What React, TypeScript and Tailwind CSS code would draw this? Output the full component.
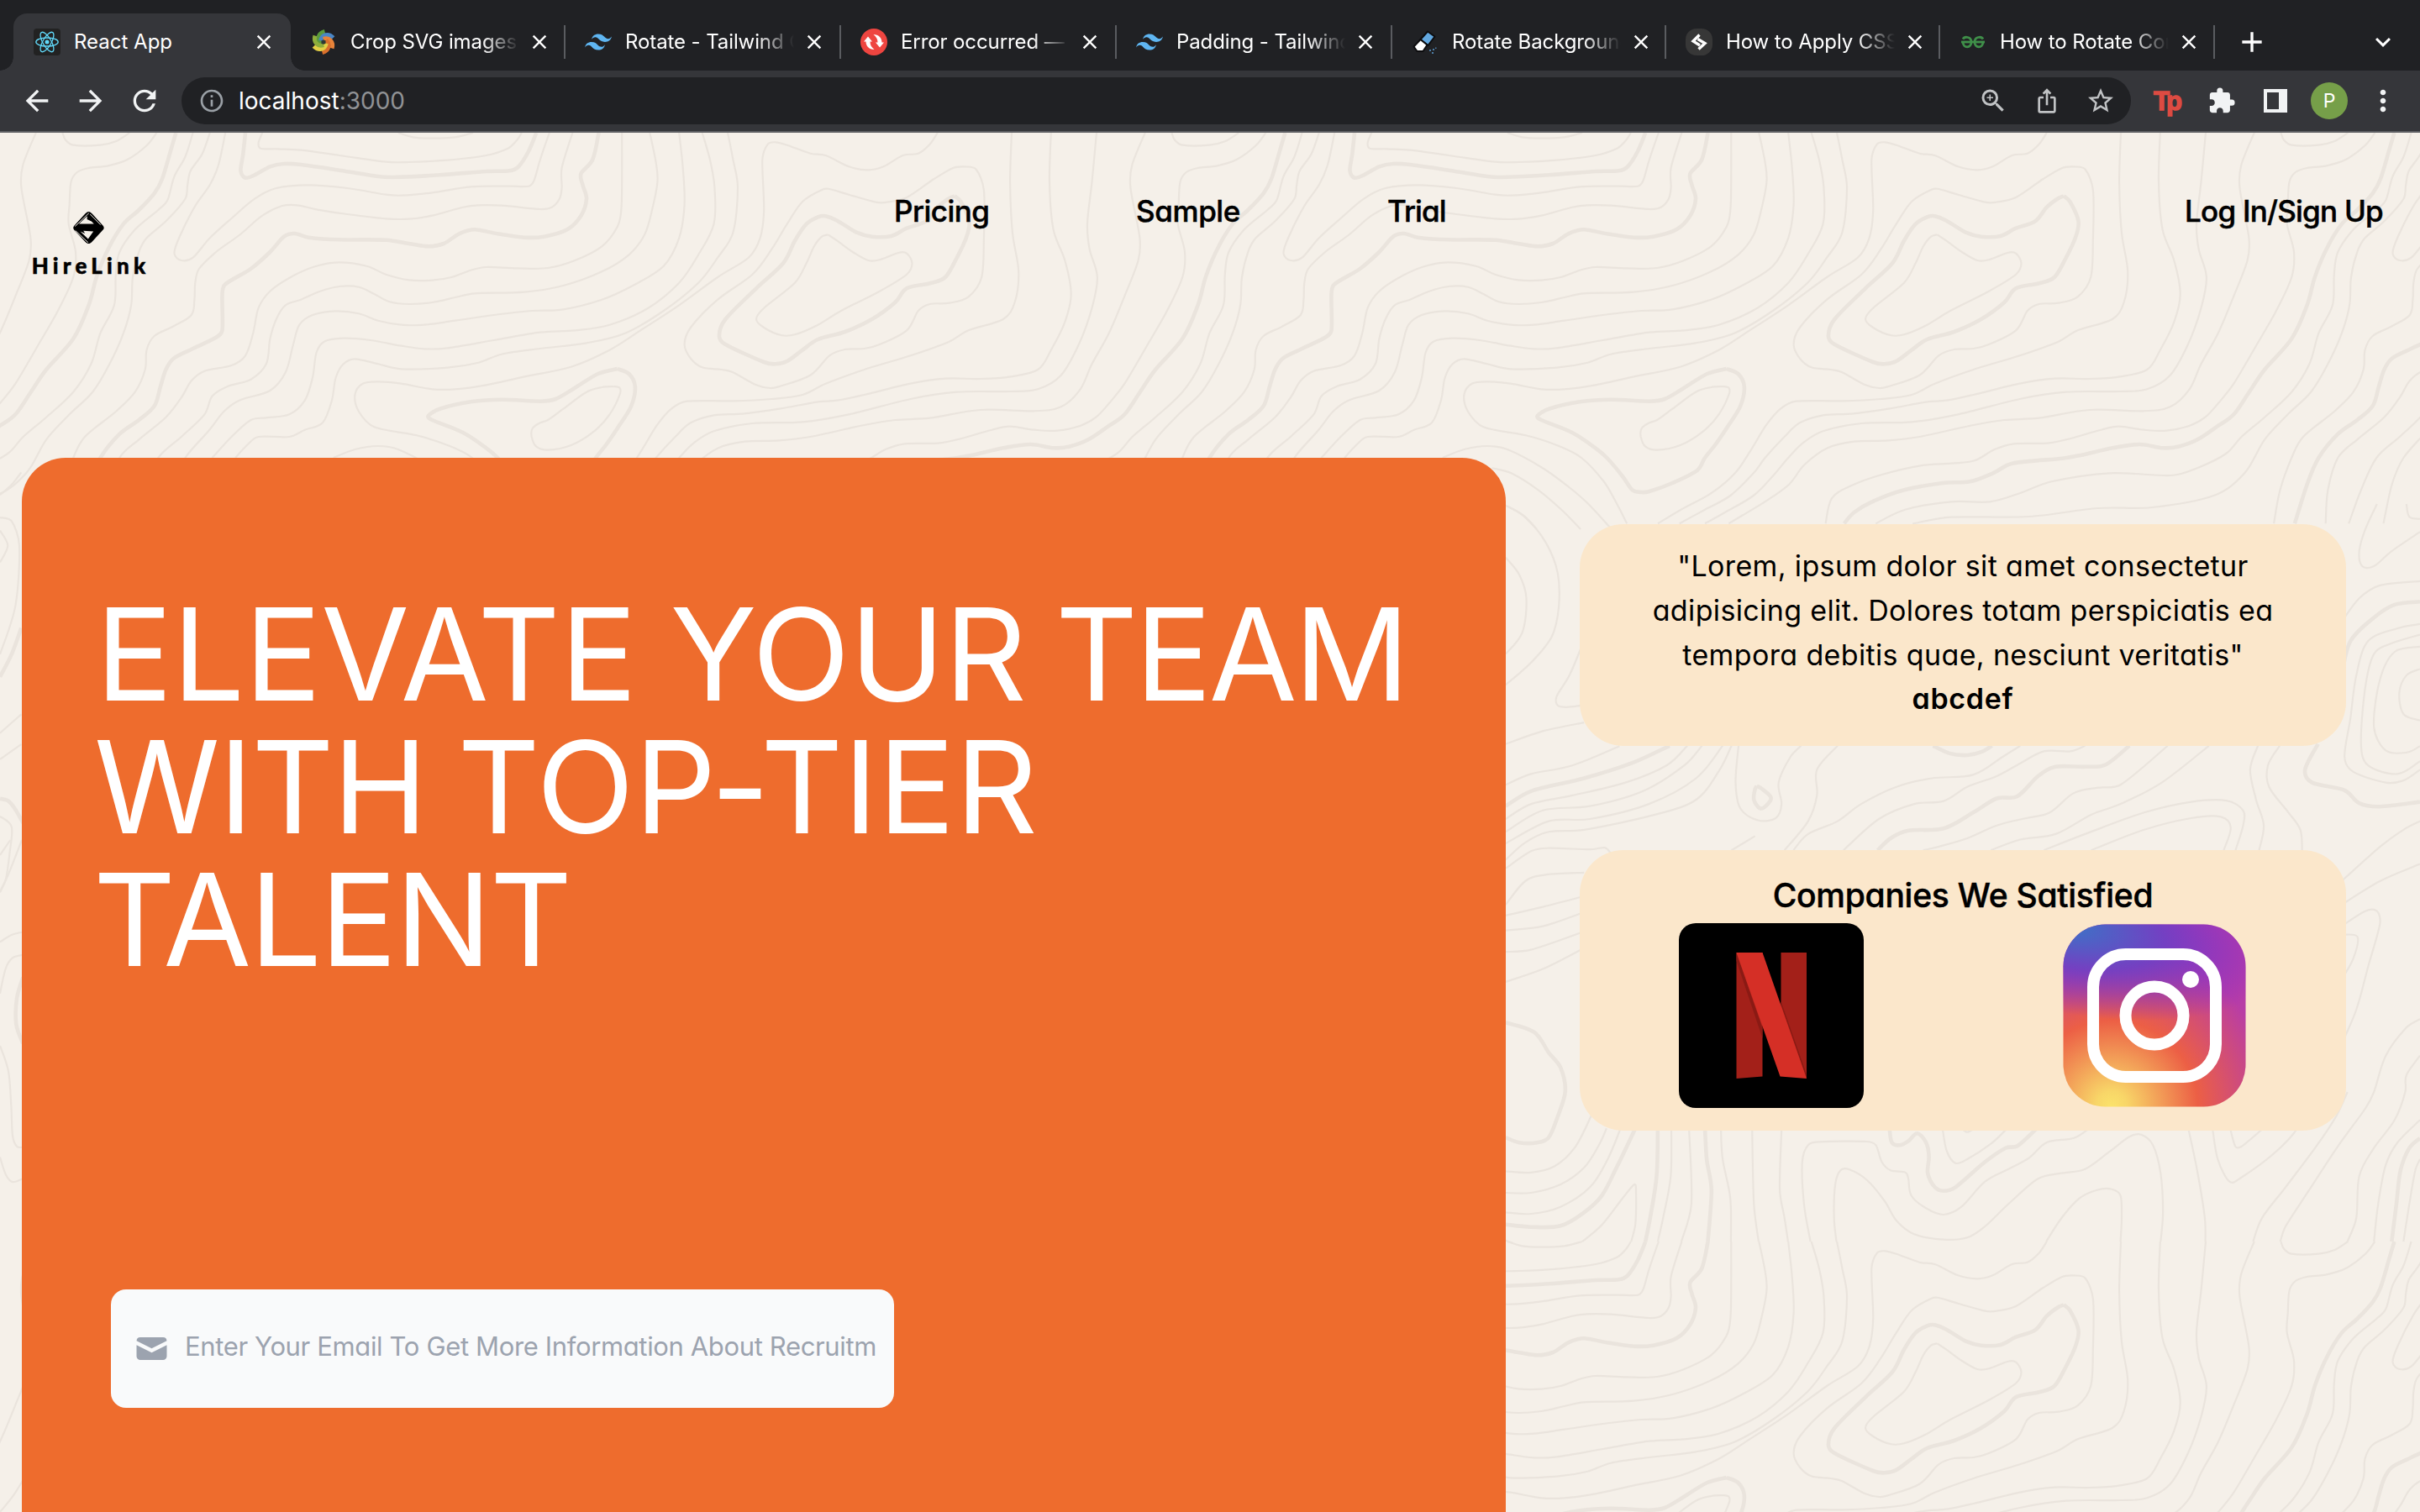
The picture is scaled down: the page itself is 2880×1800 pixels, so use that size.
import React from 'react';
import {
  MdAdd,
  MdArrowBack,
  MdArrowForward,
  MdClose,
  MdExpandMore,
  MdExtension,
  MdInfoOutline,
  MdIosShare,
  MdMoreVert,
  MdRefresh,
  MdStarBorder,
  MdZoomIn,
} from 'react-icons/md';

/* ---------- topographic background ---------- */

type Curve = { d: string; thick?: boolean };
type Project = (x: number, y: number) => [number, number];

const PERIOD = 1320;

// Curves that repeat every 1320px in both directions.
const tiled: Curve[] = [
  { d: '1484,24 1467,140 1465,220 1477,400 1475,480 1457,610 1437,740 1415,850 1400,940 1375,1003 1340,1018 1270,1014 1205,1043 1160,1050 1120,1068 1050,1110 1010,1123 965,1127 931,1150 901,1210 881,1280 851,1340 821,1390 803,1420' },
  { d: '81,24 85,50 95,68 130,68 150,55 168,24' },
  { d: '203,24 190,70 165,120 140,142 115,150 100,165 92,200 90,280 89,350 98,450 95,540 75,660 50,780 20,920 0,990 -17,1040 -37,1070 -67,1088 -97,1085 -129,1073 -152,1085 -197,1120 -222,1133 -265,1135 -290,1155 -316,1195 -346,1205 -386,1213 -436,1245 -476,1285 -501,1330 -509,1420' },
  { thick: true, d: '228,24 222,80 210,190 200,240 180,300 160,350 140,440 125,540 115,640 95,760 60,870 40,950 20,1030 0,1070 -27,1120 -52,1145 -72,1150 -102,1137 -137,1150 -177,1175 -202,1187 -267,1205 -292,1240 -322,1270 -357,1275 -407,1300 -447,1340 -472,1380 -485,1420' },
  { d: '250,24 240,110 226,180 217,265 205,300 175,370 155,450 150,530 148,640 130,740 118,850 95,950 60,1040 30,1110 10,1170 -26,1220 -61,1248 -141,1240 -216,1270 -256,1310 -296,1342 -346,1342 -406,1370 -444,1420' },
  { d: '272,24 262,100 247,160 243,210 240,260 215,340 190,400 180,450 172,540 170,640 160,740 142,850 120,950 90,1030 60,1120 34,1240 -6,1320 -86,1362 -156,1365 -246,1395 -346,1397 -396,1420' },
  { d: '292,24 283,140 272,210 252,290 232,400 226,455 235,480 250,470 272,400 300,330 330,260 358,222 400,211 450,222 500,245 520,248 560,238 610,217 660,215 685,215 692,195 700,120 712,24' },
  { d: '72,1420 80,1300 95,1185 110,1110 150,1020 175,950 188,870 190,800 200,750 225,715 248,675 252,620 253,560 258,510 280,450 310,390 340,320 365,286 385,283 410,298 450,315 500,331 530,332 560,320 600,290 620,283 650,284 700,297 715,290 725,260 728,220 728,150 742,24' },
  { thick: true, d: '318,24 315,100 312,160 318,185 330,175 350,145 368,135 390,138 440,158 490,180 510,183 570,175 630,162 660,160 672,145 685,90 695,24' },
  { d: '340,24 335,60 338,80 360,82 390,86 440,105 500,128 530,129 580,122 630,105 658,80 670,50 676,24' },
  { d: '516,24 535,40 560,44 590,40 613,24' },
  { thick: true, d: '776,24 768,120 753,170 755,210 760,260 753,320 735,370 705,395 680,398 645,385 615,370 595,385 575,420 555,430 530,420 500,407 440,406 400,398 382,384 368,395 350,450 325,510 292,565 288,600 288,730 280,755 250,795 225,830 215,870 208,930 200,1000 180,1050 155,1100 130,1185 115,1280 99,1420' },
  { d: '806,24 806,200 805,300 800,360 780,430 745,480 710,507 670,508 630,504 610,515 585,540 560,551 530,550 500,530 475,500 440,487 410,500 380,535 350,590 335,650 328,740 318,820 300,855 265,875 248,910 235,970 215,1040 180,1120 155,1185 142,1300 139,1420' },
  { d: '842,24 850,130 852,200 845,300 835,390 815,460 780,520 730,570 680,593 615,598 590,612 560,630 530,636 505,628 485,600 465,575 440,573 415,590 390,620 370,640 358,690 350,760 345,850 325,905 295,930 275,965 265,1030 235,1110 205,1185 185,1300 169,1420' },
  { d: '880,24 885,150 887,280 880,400 860,500 820,570 780,620 730,655 690,660 640,675 590,695 550,710 520,710 490,695 465,670 435,661 405,675 388,710 380,780 370,880 350,945 310,980 290,1020 270,1090 240,1185 225,1280 214,1420' },
  { d: '910,24 920,120 926,220 925,350 905,460 880,560 840,650 790,710 745,730 700,737 640,765 580,793 550,796 520,785 480,765 445,758 420,770 410,810 405,900 395,980 375,1030 345,1042 325,1050 300,1110 275,1185' },
  { d: '943,24 950,120 956,220 950,380 930,470 905,560 860,660 810,740 760,775 700,795 650,815 620,845 580,863 520,868 490,850 460,832 445,850 435,900 430,980 418,1060 395,1085 375,1110 335,1110 320,1140 305,1185' },
  { d: '432,1185 460,1155 490,1143 516,1155 561,1220 596,1290 621,1350 651,1440' },
  { d: '496,1222 521,1240 556,1300 586,1370 611,1440' },
  { d: '514,1355 536,1390 554,1440' },
  { d: '1215,24 1205,65 1190,98 1170,105 1145,145 1125,157 1100,145 1070,105 1050,98 1020,68 1005,58 995,65 988,120 990,300 985,400 970,470 930,540 880,640 830,730 790,800 740,860 680,895 630,925 590,940 560,940 520,920 490,913 470,920 460,960 465,1020 485,1075 540,1105 580,1140 612,1185 641,1270 658,1350 671,1420' },
  { thick: true, d: '800,867 815,885 823,930 818,1000 800,1080 785,1140 772,1185 762,1230 730,1275 700,1305 690,1308 678,1300 665,1250 645,1185 630,1150 600,1095 560,1050 555,1035 570,1010 610,985 650,977 700,983 720,975 745,935 775,885 800,867' },
  { d: '795,930 803,935 803,960 790,1030 770,1090 740,1140 710,1157 695,1145 689,1110 690,1080 700,1060 710,1050 730,1010 760,950 780,933 795,930' },
  { d: '1250,145 1265,155 1275,230 1275,400 1272,540 1255,610 1230,632 1205,636 1190,660 1175,730 1140,780 1120,795 1095,798 1075,820 1050,890 1010,930 998,936 980,925 950,880 935,870 910,862 895,830 887,780 895,720 930,620 975,530 1000,440 1020,350 1040,270 1065,228 1075,225 1100,245 1135,272 1150,272 1175,255 1210,190 1235,150 1250,145' },
  { thick: true, d: '1237,250 1245,270 1256,340 1252,400 1240,470 1225,540 1205,562 1175,580 1160,630 1130,690 1095,735 1060,762 1040,800 1020,840 1005,850 990,843 940,780 932,750 940,690 980,580 1015,490 1030,410 1045,350 1060,325 1070,322 1085,338 1110,380 1130,395 1155,393 1175,365 1200,340 1215,290 1230,258 1237,250' },
  { d: '1073,388 1085,410 1105,450 1125,480 1140,478 1165,452 1175,455 1182,490 1175,530 1140,590 1090,660 1060,710 1030,745 1012,747 990,720 980,690 990,650 1030,560 1045,490 1055,430 1065,395 1073,388' },
  { d: '1311,24 1309,200 1312,380 1320,520 1315,630 1300,690 1255,730 1230,770 1180,820 1120,870 1070,920 1040,960 1000,975 950,982 890,983 870,1010 851,1070 831,1160 811,1240 781,1310 741,1370 711,1420' },
  { d: '1362,24 1360,200 1365,370 1380,480 1388,600 1380,700 1362,800 1345,870 1310,895 1270,903 1225,902 1180,920 1120,960 1085,980 1060,985 1010,1010 965,1027 925,1033 895,1060 875,1110 850,1185 835,1240 805,1320 772,1370 739,1420' },
  { d: '1421,24 1415,200 1409,350 1412,440 1422,540 1415,650 1398,780 1375,890 1345,940 1310,948 1240,950 1180,975 1100,1030 1040,1057 975,1062 925,1090 900,1130 880,1185 860,1250 835,1320 798,1380 772,1420' },
];

// Curves around the two side cards.
const aside: Curve[] = [
  { d: '17,125 40,165 52,220 45,300 17,350' },
  { d: '20,5 50,30 85,90 105,160 107,240 95,310 60,370 17,422' },
  { d: '145,335 125,400 103,450 105,470 120,474 145,470' },
  { d: '17,560 80,530 150,510' },
  { thick: true, d: '17,705 60,670 150,640 230,605 295,564' },
  { d: '17,655 60,630 130,610 210,565' },
  { d: '17,735 60,700 130,680 220,650 290,610 325,564' },
  { d: '17,765 80,715 160,705 250,670 320,610 350,564' },
  { d: '17,792 90,740 160,735 260,700 340,640 385,564' },
  { d: '17,830 50,790 90,765 150,760 270,725 340,690 380,620 400,564' },
  { d: '17,850 60,810 90,803 160,806 185,802 195,815' },
  { d: '17,935 50,880 85,865 150,860' },
  { d: '17,960 80,940 150,915' },
  { d: '17,995 80,985 145,955' },
  { d: '17,1045 60,1040 145,1000' },
  { d: '17,1115 80,1085 145,1040' },
  { thick: true, d: '17,1210 65,1232 90,1280 110,1315 118,1370 105,1430 90,1478 70,1490 40,1490 17,1478' },
  { d: '17,1557 60,1560 100,1545 135,1500 163,1425' },
  { d: '412,564 407,650 415,710 445,738 475,733 485,700 480,650 500,590 518,564' },
  { thick: true, d: '443,658 450,663 467,685 458,705 448,710 438,690 440,665 443,658' },
  { d: '580,564 545,620 545,680 530,740 490,808' },
  { thick: true, d: '742,564 770,582 800,586 825,578 842,564' },
  { d: '890,564 860,590 810,632 740,640 680,660 620,700 580,740 530,770 505,808' },
  { d: '1000,564 975,577 930,577 890,605 850,635 800,660 760,693 710,700 650,735 590,808' },
  { thick: true, d: '1075,564 1035,608 1000,613 950,613 920,635 885,682 850,687 810,720 760,757 700,762 670,780 648,808' },
  { d: '1140,564 1060,655 1020,662 980,675 940,720 900,733 850,750 800,780 750,800 725,808' },
  { d: '1210,564 1130,650 1060,700 1010,725 950,770 890,783 840,808' },
  { d: '1293,564 1280,620 1290,690 1303,750 1295,808' },
  { d: '1330,564 1310,610 1312,660 1345,720 1365,760 1368,808' },
  { d: '930,808 1000,770 1100,720 1180,695 1240,692 1268,715 1268,750 1255,808' },
  { d: '1010,808 1100,760 1180,733 1230,730 1247,755 1235,808' },
  { d: '400,808 440,775' },
  { d: '1495,0 1475,60 1465,110 1470,145 1490,145 1520,110 1568,65' },
  { d: '1545,0 1550,30 1568,35' },
  { d: '1435,275 1465,220 1500,190 1568,180' },
  { thick: true, d: '1435,400 1450,320 1490,265 1525,235 1568,228' },
  { d: '1568,280 1530,290 1480,320 1460,400 1450,500 1440,590 1455,625 1510,650 1540,645 1568,620' },
  { d: '1568,305 1520,325 1490,350 1475,430 1468,560 1480,610 1530,630 1568,600' },
  { d: '1568,333 1525,345 1500,410 1490,520 1510,575 1545,580 1568,565' },
  { d: '1568,385 1545,400 1533,440 1540,490 1568,505' },
  { thick: true, d: '1395,560 1373,620 1385,650 1440,668 1465,698 1500,706 1568,695' },
  { d: '1435,880 1500,800 1540,760 1568,740' },
  { d: '1435,935 1500,880 1568,840' },
  { d: '1435,985 1475,950 1495,950 1500,980 1480,1080 1460,1180 1435,1260' },
  { d: '1435,1005 1462,1010 1455,1060 1435,1110' },
];

// Curves under the cards, down to the next vertical repeat.
const lower: Curve[] = [
  { d: '17,360 60,360 110,330 150,270 175,190 188,130' },
  { d: '17,430 60,435 110,410 160,340 190,240 212,130' },
  { thick: true, d: '17,473 60,482 110,478 150,430 180,370 205,270 237,130' },
  { d: '17,530 30,540' },
  { d: '147,534 180,475 215,380 235,330 238,350 237,470 230,534' },
  { thick: true, d: '275,130 273,300 262,450 254,534' },
  { d: '298,130 297,300 285,440 275,534' },
  { d: '328,130 332,400 315,534' },
  { thick: true, d: '355,130 358,240 366,350 360,534' },
  { d: '382,130 385,240 398,380 399,534' },
  { d: '435,130 438,400 446,534' },
  { d: '485,130 482,350 490,450 496,534' },
  { d: '534,534 523,400 520,250 530,190 550,178 630,177 645,190 655,250 670,280 695,287 700,310 705,370 730,415 760,438 790,410 830,320 870,275 905,235 935,180 980,165 1007,130' },
  { d: '578,534 574,450 576,330 585,280 600,277 630,315 660,390 680,460 710,508 760,527 800,520 830,480 870,400 920,310 960,290 1000,275 1040,215 1075,160 1095,152 1115,190 1128,290 1132,430 1128,534' },
  { thick: true, d: '668,130 672,180 685,190 700,175 715,148 730,180 735,230 733,290 745,340 760,353 780,340 830,250 865,200 885,193 918,130' },
  { d: '758,130 765,210 780,254 800,240 840,185 868,130' },
  { d: '790,130 800,143 812,130' },
  { d: '934,534 960,450 990,380 1020,350 1045,347 1060,370 1062,450 1060,534' },
  { d: '1175,130 1190,280 1203,450 1204,534' },
  { d: '1216,130 1225,240 1245,320 1265,305 1320,220 1360,130 1385,20' },
  { d: '1246,130 1255,195 1265,195 1302,130' },
  { d: '1285,534 1300,450 1340,340 1390,200 1425,90 1445,0' },
  { d: '1331,534 1340,480 1380,350 1430,190 1475,60 1490,0 1510,-130 1545,-230 1568,-260' },
  { d: '1445,534 1460,450 1465,300 1490,200 1525,100 1543,0 1545,-60 1568,-130' },
  { d: '1490,534 1497,400 1510,260 1530,180 1568,100' },
  { thick: true, d: '1520,534 1528,400 1535,280 1550,200 1568,165' },
  { d: '1540,534 1550,400 1560,280 1568,240' },
];

// Narrow strip left of the hero panel.
const leftEdge: Curve[] = [
  { d: '0,155 12,128 22,95' },
  { d: '0,215 12,225 20,290 16,450 0,580' },
  { d: '0,250 8,290 0,335' },
  { thick: true, d: '0,640 12,580 22,510' },
  { d: '0,790 22,740' },
  { d: '0,860 22,820' },
  { thick: true, d: '0,965 8,970 15,990 24,1030' },
  { d: '0,1012 12,1040 10,1110 6,1180 0,1215' },
];
const leftLow: Curve[] = [
  { d: '0,35 37,0' },
  { d: '0,120 30,80 78,0' },
  { d: '0,238 40,222 78,215' },
  { d: '0,358 20,300 45,275 85,268' },
  { thick: true, d: '82,320 60,370 58,430 82,475' },
  { d: '0,480 30,540 40,620 45,690 60,715 82,717' },
  { d: '0,740 20,780 45,798 82,790' },
];

// Catmull-Rom spline through the listed points.
function spline(d: string, project: Project): string {
  const p = d.split(' ').map((s) => {
    const [x, y] = s.split(',').map(Number);
    return project(x, y);
  });
  let out = `M${p[0][0].toFixed(1)} ${p[0][1].toFixed(1)}`;
  for (let i = 0; i < p.length - 1; i++) {
    const a = p[i - 1] ?? p[i];
    const b = p[i];
    const c = p[i + 1];
    const e = p[i + 2] ?? c;
    const len = Math.hypot(c[0] - b[0], c[1] - b[1]);
    const ctl = (from: number[], to: number[]) => {
      const vx = to[0] - from[0];
      const vy = to[1] - from[1];
      const m = Math.hypot(vx, vy) || 1;
      const k = Math.min(m / 6, len / 2.6) / m;
      return [vx * k, vy * k];
    };
    const t1 = ctl(a, c);
    const t2 = ctl(b, e);
    out += `C${(b[0] + t1[0]).toFixed(1)} ${(b[1] + t1[1]).toFixed(1)} ${(c[0] - t2[0]).toFixed(1)} ${(c[1] - t2[1]).toFixed(1)} ${c[0].toFixed(1)} ${c[1].toFixed(1)}`;
  }
  return out;
}

function Curves({ list, project }: { list: Curve[]; project: Project }) {
  return (
    <>
      {list.map((c, i) => (
        <path key={i} d={spline(c.d, project)} strokeWidth={c.thick ? 4.6 : 2.2} />
      ))}
    </>
  );
}

function Topography() {
  return (
    <svg className="absolute inset-0 h-full w-full" viewBox="0 158 2880 1642" fill="none" stroke="#eae4dd">
      <defs>
        <g id="topo">
          <Curves list={tiled} project={(x, y) => [x / 1.0889, 150 + y / 3]} />
        </g>
      </defs>
      {[-1, 0, 1, 2].map((ix) =>
        [0, 1].map((iy) => <use key={`${ix}${iy}`} href="#topo" x={ix * PERIOD} y={iy * PERIOD} />),
      )}
      <Curves list={aside} project={(x, y) => [1780 + x / 1.4255, 600 + y / 1.96]} />
      <Curves list={lower} project={(x, y) => [1780 + x / 1.4255, 1300 + y / 3]} />
      <Curves list={leftEdge} project={(x, y) => [x * 1.148, 520 + y / 2.24]} />
      <Curves list={leftLow} project={(x, y) => [x / 3, 1000 + y * 0.5102]} />
    </svg>
  );
}

/* ---------- favicons ---------- */

function ReactFavicon() {
  return (
    <svg viewBox="0 0 32 32" className="size-8">
      <rect width="32" height="32" rx="4" fill="#222222" />
      <g fill="none" stroke="#61dafb" strokeWidth="1.3">
        <ellipse cx="16" cy="16" rx="13.2" ry="5" />
        <ellipse cx="16" cy="16" rx="13.2" ry="5" transform="rotate(60 16 16)" />
        <ellipse cx="16" cy="16" rx="13.2" ry="5" transform="rotate(120 16 16)" />
      </g>
      <circle cx="16" cy="16" r="2.5" fill="#61dafb" />
    </svg>
  );
}

// Six curved blades around the centre.
function SwirlFavicon() {
  const blades = ['#5b9a3c', '#4a86c5', '#e8833a', '#d9702c', '#e3cf45', '#8fae3c'];
  return (
    <svg viewBox="0 0 32 32" className="size-8" fill="none" strokeWidth="5">
      {blades.map((c, i) => (
        <path key={i} d="M13 18C7.500 13 9.500 5.500 17.500 3.500" stroke={c} transform={`rotate(${i * 60} 16 16)`} />
      ))}
      <circle cx="16" cy="16" r="2.600" fill="#2d3a33" />
    </svg>
  );
}

function TailwindFavicon() {
  return (
    <svg viewBox="0 0 24 24" className="size-8" fill="#5fb6f2">
      <path d="M12.001 4.800c-3.200 0-5.200 1.600-6 4.800 1.200-1.600 2.600-2.200 4.200-1.800.913.228 1.565.890 2.288 1.624C13.666 10.618 15.027 12 18.001 12c3.200 0 5.200-1.600 6-4.800-1.200 1.600-2.600 2.200-4.200 1.800-.913-.228-1.565-.890-2.288-1.624C16.337 6.182 14.976 4.800 12.001 4.800zm-6 7.200c-3.200 0-5.200 1.600-6 4.800 1.200-1.600 2.600-2.200 4.200-1.800.913.228 1.565.890 2.288 1.624 1.177 1.194 2.538 2.576 5.512 2.576 3.200 0 5.200-1.600 6-4.800-1.200 1.600-2.600 2.200-4.200 1.800-.913-.228-1.565-.890-2.288-1.624C10.337 13.382 8.976 12 6.001 12z" />
    </svg>
  );
}

function ConvertFavicon() {
  return (
    <svg viewBox="0 0 32 32" className="size-8">
      <circle cx="16" cy="16" r="16" fill="#ee4540" />
      <g fill="#fff">
        <path d="M4 15.500 9 9.500l5 6h-2.500c0 4 1.500 6.500 5 9.500C10.500 25 6.500 21 6.500 15.500z" />
        <path d="M28 16.500 23 22.500l-5-6h2.500c0-4-1.500-6.500-5-9.500 6 0 10 4 10 9.500z" />
      </g>
    </svg>
  );
}

function EraserFavicon() {
  return (
    <svg viewBox="0 0 32 32" className="size-8" strokeLinejoin="round">
      <path d="M19 3.500 27.500 9.500 19.500 20 10.500 13z" fill="#62a8e0" stroke="#0c0c0e" strokeWidth="2" />
      <path d="M10.500 13 18.500 19.500 13.500 27H6.500l-4-5.500z" fill="#fff" stroke="#0c0c0e" strokeWidth="2" />
      <path d="M21 25h2v2h-2zM24 28h2v2h-2zM25 24h2v2h-2zM28 22.500h1.500V24H28z" fill="#4f7fa8" />
    </svg>
  );
}

function DarkFavicon() {
  return (
    <svg viewBox="0 0 32 32" className="size-8">
      <rect width="32" height="32" rx="13" fill="#373737" />
      <path d="M16.500 7.500 9 15l8 5" fill="none" stroke="#fff" strokeWidth="3.400" />
      <path d="M14.500 12.500l8.500 5-7.500 7" fill="none" stroke="#fff" strokeWidth="3.400" />
    </svg>
  );
}

function GeeksFavicon() {
  return (
    <svg viewBox="0 0 32 32" className="size-8" fill="none" stroke="#3f8f49" strokeWidth="2.800">
      <path d="M2 16h28" />
      <path d="M4 12.500C6 9 14 9.500 14 16c0 7.500-9.500 8-10 0M28 12.500C26 9 18 9.500 18 16c0 7.500 9.500 8 10 0" />
    </svg>
  );
}

/* ---------- browser chrome ---------- */

const tabs = [
  { title: 'Crop SVG images', icon: <SwirlFavicon />, width: 'w-[327px]' },
  { title: 'Rotate - Tailwind CSS', icon: <TailwindFavicon />, width: 'w-[328px]' },
  { title: 'Error occurred — Convert', icon: <ConvertFavicon />, width: 'w-[328px]' },
  { title: 'Padding - Tailwind CSS', icon: <TailwindFavicon />, width: 'w-[328px]' },
  { title: 'Rotate Background', icon: <EraserFavicon />, width: 'w-[326px]' },
  { title: 'How to Apply CSS', icon: <DarkFavicon />, width: 'w-[326px]' },
  { title: 'How to Rotate Container', icon: <GeeksFavicon />, width: 'w-[327px]' },
];

function TabBar() {
  return (
    <div className="flex h-[84px] shrink-0 bg-[#202124] pl-4 text-2xl text-white">
      <div className="relative mt-4 flex h-[68px] w-[330px] shrink-0 items-center rounded-t-[16px] bg-[#35363a] pl-6">
        <span className="absolute bottom-0 -left-4 size-4 bg-[radial-gradient(circle_at_0_0,transparent_15.500px,#35363a_16px)]" />
        <span className="absolute -right-4 bottom-0 size-4 bg-[radial-gradient(circle_at_100%_0,transparent_15.500px,#35363a_16px)]" />
        <ReactFavicon />
        <span className="ml-4 w-[212px]">React App</span>
        <MdClose className="size-7" />
      </div>
      {tabs.map((t, i) => (
        <div key={i} className={`mt-4 flex h-[68px] shrink-0 items-center pl-[23px] ${t.width}`}>
          {t.icon}
          <span className="mr-[10px] ml-4 w-[201px] overflow-hidden tracking-[-0.100px] whitespace-nowrap [mask-image:linear-gradient(to_right,black_78%,transparent)]">
            {t.title}
          </span>
          <MdClose className="size-7" />
          <span className="ml-auto h-10 w-[2px] bg-[#5a5c60]" />
        </div>
      ))}
      <div className="mt-4 flex h-[68px] flex-1 items-center justify-between pr-[26px] pl-[24px]">
        <MdAdd className="size-10" />
        <MdExpandMore className="size-9" />
      </div>
    </div>
  );
}

const cell = 'flex w-16 shrink-0 items-center justify-center';

function Toolbar() {
  return (
    <div className="flex h-[74px] shrink-0 items-center border-b-2 border-[#5f6064] bg-[#35363a] pl-3 text-[#f1f3f4]">
      <div className={cell}><MdArrowBack className="size-10" /></div>
      <div className={cell}><MdArrowForward className="size-10" /></div>
      <div className={cell}><MdRefresh className="size-10" /></div>
      <div className="ml-3 flex h-14 w-[2320px] shrink-0 items-center rounded-full bg-[#202124] pr-1 pl-5">
        <MdInfoOutline className="size-8 text-[#9aa0a6]" />
        <span className="ml-4 flex-1 text-[28px] text-white">
          localhost<span className="text-[#909295]">:3000</span>
        </span>
        <div className="flex text-[#c1c3c5]">
          <div className={cell}><MdZoomIn className="size-[36px]" /></div>
          <div className={cell}><MdIosShare className="size-[32px]" /></div>
          <div className={cell}><MdStarBorder className="size-[36px]" /></div>
        </div>
      </div>
      <div className="ml-3 flex items-center">
        <div className={cell}>
          <span className="-ml-1 font-['Liberation_Sans'] text-[31px] leading-none font-bold tracking-[-4px] text-[#dd4b42] [-webkit-text-stroke:1.500px_#dd4b42]">Tp</span>
        </div>
        <div className={cell}><MdExtension className="size-[34px]" /></div>
        <div className={cell}>
          <span className="h-7 w-7 border-y-4 border-r-[10px] border-l-4 border-[#f1f3f4]" />
        </div>
        <div className={cell}>
          <span className="flex size-11 items-center justify-center rounded-full bg-[#769f49] text-[23px] text-white">P</span>
        </div>
        <div className={cell}><MdMoreVert className="size-10" /></div>
      </div>
    </div>
  );
}

/* ---------- page ---------- */

function Logo() {
  return (
    <div className="absolute top-[93px] left-[37px] flex w-[136px] flex-col items-center">
      <svg viewBox="258 93 118 121" className="h-[40px] w-[39px]">
        <path d="M317 96c5 0 8 3 12 7l40 44c4 5 4 9 0 14l-41 45c-7 7-15 7-22 0l-40-43c-5-5-6-10-1-16l40-44c4-4 7-7 12-7z" fill="#000" />
        <path d="M318 101 268 149" stroke="#f5f0e9" strokeWidth="3" fill="none" />
        <path d="M269 164l46 43" stroke="#f5f0e9" strokeWidth="3" fill="none" />
        <path d="M322 105l38 38" stroke="#f5f0e9" strokeWidth="3" fill="none" />
        <path d="M312 112 282 140h54l-9-9-16-8z" fill="#f5f0e9" />
        <path d="M287 167l28 27 19-27-36-2 6 10z" fill="#f5f0e9" />
      </svg>
      <span className="mt-[9px] -mr-[6px] font-[Lato] text-[26px] leading-[32px] font-black tracking-[5.200px] whitespace-nowrap">HireLink</span>
    </div>
  );
}

function NetflixLogo() {
  return (
    <svg viewBox="0 0 220 220" className="size-[220px]">
      <rect width="220" height="220" rx="20" fill="#000" />
      <path d="M68.500 35h31v147.500l-31 2.500z" fill="#a32019" />
      <path d="M121.500 35h30.500v150l-30.500-60z" fill="#a32019" />
      <path d="M68.500 35 99.500 125v12L68.500 45z" fill="#8a1a14" />
      <path d="M121.500 93 152 180v5L121.500 98z" fill="#8a1a14" />
      <path d="M68.500 35h31L152 185l-31.500-2.500z" fill="#d52f26" />
    </svg>
  );
}

function InstagramLogo() {
  return (
    <svg viewBox="0 0 220 220" className="size-[220px]">
      <defs>
        <radialGradient id="warm" cx="0.265" cy="1" r="1.050">
          <stop offset="0" stopColor="#fbe36b" />
          <stop offset="0.080" stopColor="#f8d668" />
          <stop offset="0.450" stopColor="#ec5f45" />
          <stop offset="0.850" stopColor="#b83da6" />
          <stop offset="1" stopColor="#b83da6" />
        </radialGradient>
        <radialGradient id="cool" gradientUnits="userSpaceOnUse" cx="0" cy="0" r="1" gradientTransform="rotate(12) scale(260 105)">
          <stop offset="0" stopColor="#4270c6" />
          <stop offset="0.100" stopColor="#436cc6" />
          <stop offset="0.480" stopColor="#7040c4" stopOpacity="0.950" />
          <stop offset="1" stopColor="#7a25d8" stopOpacity="0" />
        </radialGradient>
      </defs>
      <rect x="1.500" y="1.500" width="217" height="217" rx="50" fill="url(#warm)" />
      <rect x="1.500" y="1.500" width="217" height="217" rx="50" fill="url(#cool)" />
      <g fill="none" stroke="#fff" strokeWidth="14">
        <rect x="37" y="37" width="146" height="146" rx="39" />
        <circle cx="110" cy="110" r="34.500" />
      </g>
      <circle cx="153" cy="67" r="10" fill="#fff" />
    </svg>
  );
}

function Header() {
  return (
    <header className="relative flex h-[387px] shrink-0 items-start justify-end pt-[68px] pr-[44px] text-[35px] leading-[50px] font-medium [-webkit-text-stroke:0.500px_black]">
      <Logo />
      <nav className="absolute left-[1064px] flex">
        <span className="w-[288px] tracking-[-0.500px]">Pricing</span>
        <span className="w-[299px] tracking-[-0.400px]">Sample</span>
        <span className="tracking-[-0.900px]">Trial</span>
      </nav>
      <span className="tracking-[-0.750px]">Log In/Sign Up</span>
    </header>
  );
}

function Hero() {
  return (
    <section className="w-[1766px] shrink-0 rounded-t-[52px] bg-[#ee6c2d] pt-[155px]">
      <h1 className="ml-[88px] text-[152px] leading-[158px] whitespace-nowrap text-white">
        <span className="tracking-[-0.100px] [word-spacing:-3px]">ELEVATE </span>
        <span className="tracking-[-0.300px] [word-spacing:-8px]">YOUR </span>
        <span className="tracking-[-3.400px]">TEAM</span>
        <br />
        <span className="-ml-[2px] tracking-[-1.600px] [word-spacing:-4px]">WITH </span>
        <span className="tracking-[0.500px]">TOP-TIER</span>
        <br />
        <span className="-ml-[3px] tracking-[-2px]">TALENT</span>
      </h1>
      <div className="mt-[361px] ml-[106px] flex h-[141px] w-[932px] items-center rounded-[18px] bg-[#f9fafb] pl-[26px]">
        <svg viewBox="0 0 20 20" className="size-[45px] shrink-0" fill="#9ca3af">
          <path d="M2.003 5.884L10 9.882l7.997-3.998A2 2 0 0016 4H4a2 2 0 00-1.997 1.884z" />
          <path d="M18 8.118l-8 4-8-4V14a2 2 0 002 2h12a2 2 0 002-2V8.118z" />
        </svg>
        <span className="-mt-[6px] ml-[17px] w-[823px] overflow-hidden text-[31px] leading-[48px] tracking-[-0.360px] whitespace-nowrap text-[#9ca3af]">
          Enter Your Email To Get More Information About Recruitment
        </span>
      </div>
    </section>
  );
}

function Side() {
  return (
    <aside className="ml-[88px] flex w-[912px] flex-col gap-[124px] pt-[79px] text-center">
      <div className="h-[264px] rounded-[52px] bg-[#fbe7cb] pt-6 text-[34px] leading-[52.800px] tracking-[0.360px] whitespace-nowrap">
        <p>
          "Lorem, ipsum dolor sit amet consectetur
          <br />
          adipisicing elit. Dolores totam perspiciatis ea
          <br />
          tempora debitis quae, nesciunt veritatis"
        </p>
        <p className="font-semibold tracking-[0.700px]">abcdef</p>
      </div>
      <div className="h-[334px] rounded-[52px] bg-[#fbe7cb] pt-[26px]">
        <h2 className="text-[39px] leading-[56px] font-medium tracking-[-0.250px] [-webkit-text-stroke:0.500px_black]">Companies We Satisfied</h2>
        <div className="mt-[5px] flex justify-between px-[118px]">
          <NetflixLogo />
          <InstagramLogo />
        </div>
      </div>
    </aside>
  );
}

export default function App() {
  return (
    <div className="flex h-[1800px] w-[2880px] flex-col overflow-hidden font-[Inter,sans-serif] text-black">
      <TabBar />
      <Toolbar />
      <div className="relative flex min-h-0 flex-1 flex-col overflow-hidden bg-[#f5f0e9] [font-feature-settings:'cv11']">
        <Topography />
        <Header />
        <main className="relative flex min-h-0 flex-1 pl-[26px]">
          <Hero />
          <Side />
        </main>
      </div>
    </div>
  );
}
